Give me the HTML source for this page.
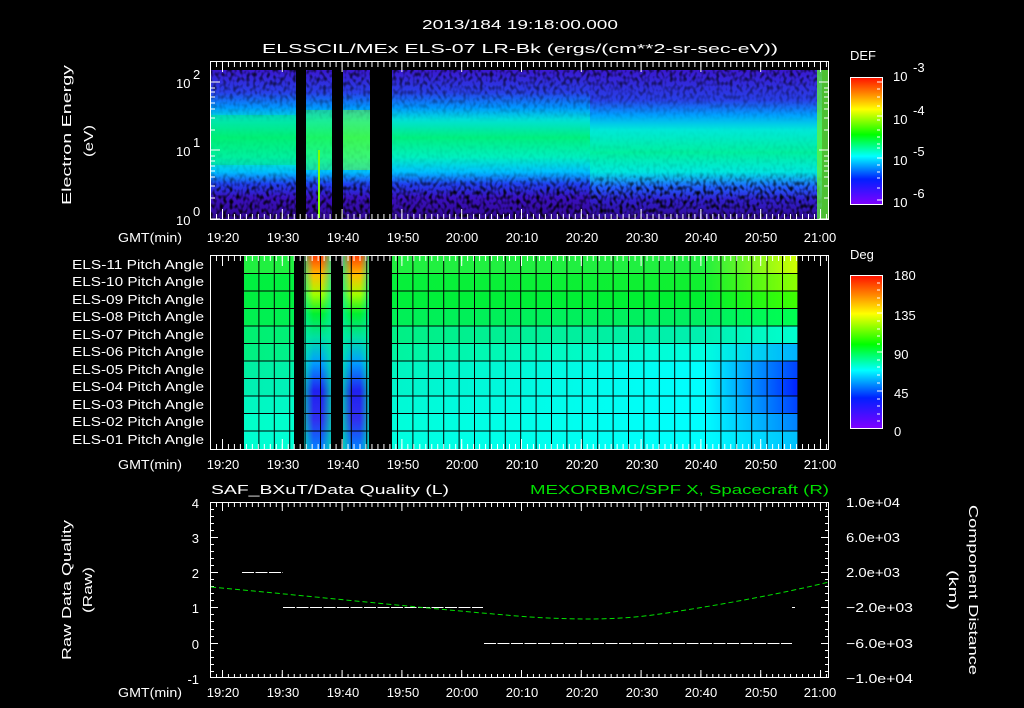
<!DOCTYPE html>
<html><head><meta charset="utf-8"><style>
html,body{margin:0;padding:0;background:#000;width:1024px;height:708px;overflow:hidden}
svg{display:block}
text{font-family:"Liberation Sans",sans-serif;fill:#fff;font-size:13px}
</style></head><body>
<svg width="1024" height="708" viewBox="0 0 1024 708" xmlns="http://www.w3.org/2000/svg">
<defs>
<linearGradient id="spec" x1="0" y1="0" x2="0" y2="1">
<stop offset="0" stop-color="#3a18d0"/><stop offset="0.15" stop-color="#2840e8"/>
<stop offset="0.25" stop-color="#0098ff"/><stop offset="0.33" stop-color="#00e0d8"/>
<stop offset="0.45" stop-color="#00f080"/><stop offset="0.58" stop-color="#00f0c0"/>
<stop offset="0.68" stop-color="#00c0ff"/><stop offset="0.76" stop-color="#2040f0"/>
<stop offset="0.85" stop-color="#3a10c0"/><stop offset="1" stop-color="#300890"/>
</linearGradient>
<linearGradient id="spec2" x1="0" y1="0" x2="0" y2="1">
<stop offset="0" stop-color="#3a18d0"/><stop offset="0.2" stop-color="#2840e8"/>
<stop offset="0.3" stop-color="#00a0ff"/><stop offset="0.4" stop-color="#00e8d8"/>
<stop offset="0.55" stop-color="#00f0a0"/><stop offset="0.68" stop-color="#00e8e0"/>
<stop offset="0.78" stop-color="#2060ff"/><stop offset="0.86" stop-color="#3020d0"/>
<stop offset="1" stop-color="#300890"/>
</linearGradient>
<linearGradient id="cbar" x1="0" y1="0" x2="0" y2="1">
<stop offset="0" stop-color="#ff1000"/><stop offset="0.12" stop-color="#ff8000"/>
<stop offset="0.25" stop-color="#ffff00"/><stop offset="0.45" stop-color="#00ff00"/>
<stop offset="0.62" stop-color="#00ffff"/><stop offset="0.8" stop-color="#0020ff"/>
<stop offset="1" stop-color="#8000ff"/>
</linearGradient>
<filter id="noise" x="0" y="0" width="1" height="1">
<feTurbulence type="fractalNoise" baseFrequency="0.3 0.22" numOctaves="1" seed="3"/>
<feColorMatrix type="matrix" values="0 0 0 0 0  0 0 0 0 0  0 0 0 0 0  0 0 0 -3 1.7"/>
</filter>
<linearGradient id="nmask" x1="0" y1="0" x2="0" y2="1">
<stop offset="0" stop-color="#fff" stop-opacity="0.8"/><stop offset="0.25" stop-color="#fff" stop-opacity="0.2"/>
<stop offset="0.35" stop-color="#fff" stop-opacity="0"/><stop offset="0.68" stop-color="#fff" stop-opacity="0.1"/>
<stop offset="0.8" stop-color="#fff" stop-opacity="0.9"/><stop offset="1" stop-color="#fff" stop-opacity="1"/>
</linearGradient>
<mask id="nm"><rect x="210" y="70" width="619" height="150" fill="url(#nmask)"/></mask>
<pattern id="tmin" patternUnits="userSpaceOnUse" x="210" y="0" width="5.98" height="708"><rect x="0" y="0" width="1" height="708" fill="#fff"/></pattern>
<pattern id="tmaj" patternUnits="userSpaceOnUse" x="222" y="0" width="59.8" height="708"><rect x="0" y="0" width="1" height="708" fill="#fff"/></pattern>
<pattern id="gridv" patternUnits="userSpaceOnUse" x="243" y="0" width="15.4" height="708"><rect x="0" y="0" width="1" height="708" fill="#000"/></pattern>
</defs>

<text x="422" y="29" font-size="16" textLength="196" lengthAdjust="spacingAndGlyphs">2013/184 19:18:00.000</text>
<text x="262" y="53" font-size="16" textLength="516" lengthAdjust="spacingAndGlyphs">ELSSCIL/MEx ELS-07 LR-Bk   (ergs/(cm**2-sr-sec-eV))</text>

<rect x="211" y="70" width="400" height="150" fill="url(#spec)"/>
<rect x="590" y="70" width="232" height="150" fill="url(#spec2)"/>
<rect x="211" y="115" width="85" height="50" fill="#00f060" opacity="0.35"/>
<rect x="306" y="110" width="26" height="60" fill="#40ff40" opacity="0.4"/>
<rect x="343" y="110" width="27" height="60" fill="#80ff20" opacity="0.45"/>
<rect x="211" y="70" width="618" height="150" filter="url(#noise)" mask="url(#nm)"/>
<rect x="817" y="70" width="12" height="150" fill="#60f040" opacity="0.8"/>
<rect x="296" y="70" width="10" height="150" fill="#000"/>
<rect x="332" y="70" width="11" height="150" fill="#000"/>
<rect x="370" y="70" width="22" height="150" fill="#000"/>
<rect x="318" y="150" width="2" height="68" fill="#80ff00"/>
<rect x="210.5" y="61.5" width="618" height="158" fill="none" stroke="#fff"/>
<rect x="210" y="62" width="619" height="5" fill="url(#tmin)"/>
<rect x="210" y="62" width="619" height="10" fill="url(#tmaj)"/>
<rect x="210" y="214" width="619" height="5" fill="url(#tmin)"/>
<rect x="210" y="209" width="619" height="10" fill="url(#tmaj)"/>
<g stroke="#fff">
<path d="M210 82h10M210 150h10M210 219h10M819 82h10M819 150h10M819 219h10"/>
<path d="M210 130h5M210 118h5M210 109h5M210 103h5M210 97h5M210 92h5M210 88h5M210 198h5M210 186h5M210 177h5M210 171h5M210 166h5M210 161h5M210 156h5"/>
<path d="M824 130h5M824 118h5M824 109h5M824 103h5M824 97h5M824 92h5M824 88h5M824 198h5M824 186h5M824 177h5M824 171h5M824 166h5M824 161h5M824 156h5"/>
</g>
<text x="176" y="88" font-size="14">10</text><text x="193" y="79" font-size="10">2</text>
<text x="176" y="156" font-size="14">10</text><text x="193" y="147" font-size="10">1</text>
<text x="176" y="225" font-size="14">10</text><text x="193" y="216" font-size="10">0</text>
<text transform="translate(71,135) rotate(-90)" x="-70" font-size="15" textLength="140" lengthAdjust="spacingAndGlyphs">Electron Energy</text>
<text transform="translate(93,141) rotate(-90)" x="-16" font-size="16" textLength="32" lengthAdjust="spacingAndGlyphs">(eV)</text>

<text x="850" y="60" font-size="16">DEF</text>
<rect x="850.5" y="77.5" width="32" height="127" fill="url(#cbar)" stroke="#fff"/>
<g stroke="#fff"><path d="M877 82h6M877 89h3M877 97h3M877 106h3M877 116h6M877 120h3M877 130h3M877 137h3M877 144h3M877 148h3M877 158h6M877 165h3M877 172h3M877 178h3M877 188h3M877 200h6"/></g>
<text x="893" y="81" font-size="16">10</text><text x="913" y="72" font-size="11">-3</text>
<text x="893" y="124" font-size="16">10</text><text x="913" y="115" font-size="11">-4</text>
<text x="893" y="165" font-size="16">10</text><text x="913" y="156" font-size="11">-5</text>
<text x="893" y="207" font-size="16">10</text><text x="913" y="198" font-size="11">-6</text>

<g font-size="14" text-anchor="middle">
<text x="118" y="242" text-anchor="start" textLength="64" lengthAdjust="spacingAndGlyphs">GMT(min)</text>
<text x="223" y="242">19:20</text><text x="283" y="242">19:30</text><text x="343" y="242">19:40</text><text x="403" y="242">19:50</text><text x="462" y="242">20:00</text><text x="522" y="242">20:10</text><text x="582" y="242">20:20</text><text x="642" y="242">20:30</text><text x="701" y="242">20:40</text><text x="761" y="242">20:50</text><text x="820" y="242">21:00</text>
<text x="118" y="469" text-anchor="start" textLength="64" lengthAdjust="spacingAndGlyphs">GMT(min)</text>
<text x="223" y="469">19:20</text><text x="283" y="469">19:30</text><text x="343" y="469">19:40</text><text x="403" y="469">19:50</text><text x="462" y="469">20:00</text><text x="522" y="469">20:10</text><text x="582" y="469">20:20</text><text x="642" y="469">20:30</text><text x="701" y="469">20:40</text><text x="761" y="469">20:50</text><text x="820" y="469">21:00</text>
<text x="118" y="697" text-anchor="start" textLength="64" lengthAdjust="spacingAndGlyphs">GMT(min)</text>
<text x="223" y="697">19:20</text><text x="283" y="697">19:30</text><text x="343" y="697">19:40</text><text x="403" y="697">19:50</text><text x="462" y="697">20:00</text><text x="522" y="697">20:10</text><text x="582" y="697">20:20</text><text x="642" y="697">20:30</text><text x="701" y="697">20:40</text><text x="761" y="697">20:50</text><text x="820" y="697">21:00</text>
</g>

<defs>
<linearGradient id="r1"><stop offset="0" stop-color="#20f040"/><stop offset="0.83" stop-color="#20f040"/><stop offset="1" stop-color="#d0ff00"/></linearGradient>
<linearGradient id="r2"><stop offset="0" stop-color="#00f040"/><stop offset="0.83" stop-color="#10f030"/><stop offset="1" stop-color="#90ff00"/></linearGradient>
<linearGradient id="r3"><stop offset="0" stop-color="#00f040"/><stop offset="0.83" stop-color="#00f030"/><stop offset="1" stop-color="#40ff00"/></linearGradient>
<linearGradient id="r4"><stop offset="0" stop-color="#00f050"/><stop offset="0.83" stop-color="#00f060"/><stop offset="1" stop-color="#00ff50"/></linearGradient>
<linearGradient id="r5"><stop offset="0" stop-color="#00f070"/><stop offset="0.83" stop-color="#00f0b0"/><stop offset="1" stop-color="#00ffd0"/></linearGradient>
<linearGradient id="r6"><stop offset="0" stop-color="#00f080"/><stop offset="0.83" stop-color="#00ffe0"/><stop offset="1" stop-color="#00b0ff"/></linearGradient>
<linearGradient id="r7"><stop offset="0" stop-color="#00f0a0"/><stop offset="0.83" stop-color="#00ffff"/><stop offset="1" stop-color="#0040ff"/></linearGradient>
<linearGradient id="r8"><stop offset="0" stop-color="#00f0b0"/><stop offset="0.83" stop-color="#00ffff"/><stop offset="1" stop-color="#0020ff"/></linearGradient>
<linearGradient id="r9"><stop offset="0" stop-color="#00f8c0"/><stop offset="0.83" stop-color="#00ffff"/><stop offset="1" stop-color="#0040ff"/></linearGradient>
<linearGradient id="r10"><stop offset="0" stop-color="#00ffc8"/><stop offset="0.83" stop-color="#00ffff"/><stop offset="1" stop-color="#0080ff"/></linearGradient>
<linearGradient id="r11"><stop offset="0" stop-color="#00ffd0"/><stop offset="0.83" stop-color="#00ffff"/><stop offset="1" stop-color="#00c0ff"/></linearGradient>
<linearGradient id="s1" x1="0" y1="0" x2="0" y2="1"><stop offset="0" stop-color="#ff4000"/><stop offset="0.1" stop-color="#ffc000"/><stop offset="0.2" stop-color="#a0ff00"/><stop offset="0.3" stop-color="#00f030"/><stop offset="0.42" stop-color="#00e0a0"/><stop offset="0.55" stop-color="#00a0ff"/><stop offset="0.7" stop-color="#2020f0"/><stop offset="0.85" stop-color="#3030f0"/><stop offset="1" stop-color="#0080ff"/></linearGradient>
<linearGradient id="sfade" x1="0" y1="0" x2="1" y2="0"><stop offset="0" stop-color="#00f0a0" stop-opacity="0.7"/><stop offset="0.35" stop-color="#00f0a0" stop-opacity="0"/><stop offset="0.65" stop-color="#00f0a0" stop-opacity="0"/><stop offset="1" stop-color="#00f0a0" stop-opacity="0.7"/></linearGradient>
</defs>
<g>
<rect x="243" y="256" width="555" height="18" fill="url(#r1)"/>
<rect x="243" y="273" width="555" height="18" fill="url(#r2)"/>
<rect x="243" y="291" width="555" height="18" fill="url(#r3)"/>
<rect x="243" y="308" width="555" height="18" fill="url(#r4)"/>
<rect x="243" y="326" width="555" height="18" fill="url(#r5)"/>
<rect x="243" y="343" width="555" height="18" fill="url(#r6)"/>
<rect x="243" y="361" width="555" height="18" fill="url(#r7)"/>
<rect x="243" y="378" width="555" height="18" fill="url(#r8)"/>
<rect x="243" y="396" width="555" height="18" fill="url(#r9)"/>
<rect x="243" y="413" width="555" height="18" fill="url(#r10)"/>
<rect x="243" y="431" width="555" height="18" fill="url(#r11)"/>
<rect x="304" y="256" width="27" height="193" fill="url(#s1)"/>
<rect x="304" y="256" width="27" height="193" fill="url(#sfade)"/>
<rect x="343" y="256" width="26" height="193" fill="url(#s1)"/>
<rect x="343" y="256" width="26" height="193" fill="url(#sfade)"/>
<rect x="243" y="256" width="555" height="193" fill="url(#gridv)"/>
<g stroke="#000" stroke-width="1"><path d="M243 273.5h555M243 291h555M243 308.5h555M243 326h555M243 343.5h555M243 361h555M243 378.5h555M243 396h555M243 413.5h555M243 431h555"/></g>
<rect x="211" y="256" width="32" height="193" fill="#000"/>
<rect x="294" y="256" width="10" height="193" fill="#000"/>
<rect x="331" y="256" width="12" height="193" fill="#000"/>
<rect x="369" y="256" width="23" height="193" fill="#000"/>
<rect x="798" y="256" width="31" height="193" fill="#000"/>
</g>
<rect x="210.5" y="255.5" width="618" height="194" fill="none" stroke="#fff"/>
<rect x="210" y="256" width="619" height="5" fill="url(#tmin)"/>
<rect x="210" y="256" width="619" height="10" fill="url(#tmaj)"/>
<rect x="210" y="444" width="619" height="5" fill="url(#tmin)"/>
<rect x="210" y="439" width="619" height="10" fill="url(#tmaj)"/>
<g font-size="13">
<text x="72" y="269" textLength="132" lengthAdjust="spacingAndGlyphs">ELS-11 Pitch Angle</text>
<text x="72" y="286" textLength="132" lengthAdjust="spacingAndGlyphs">ELS-10 Pitch Angle</text>
<text x="72" y="304" textLength="132" lengthAdjust="spacingAndGlyphs">ELS-09 Pitch Angle</text>
<text x="72" y="321" textLength="132" lengthAdjust="spacingAndGlyphs">ELS-08 Pitch Angle</text>
<text x="72" y="339" textLength="132" lengthAdjust="spacingAndGlyphs">ELS-07 Pitch Angle</text>
<text x="72" y="356" textLength="132" lengthAdjust="spacingAndGlyphs">ELS-06 Pitch Angle</text>
<text x="72" y="374" textLength="132" lengthAdjust="spacingAndGlyphs">ELS-05 Pitch Angle</text>
<text x="72" y="391" textLength="132" lengthAdjust="spacingAndGlyphs">ELS-04 Pitch Angle</text>
<text x="72" y="409" textLength="132" lengthAdjust="spacingAndGlyphs">ELS-03 Pitch Angle</text>
<text x="72" y="426" textLength="132" lengthAdjust="spacingAndGlyphs">ELS-02 Pitch Angle</text>
<text x="72" y="444" textLength="132" lengthAdjust="spacingAndGlyphs">ELS-01 Pitch Angle</text>
</g>

<text x="850" y="259" font-size="16">Deg</text>
<rect x="850.5" y="275.5" width="32" height="153" fill="url(#cbar)" stroke="#fff"/>
<g stroke="#fff"><path d="M877 283h3M877 290h3M877 298h3M877 305h3M877 313h6M877 321h3M877 329h3M877 336h3M877 344h3M877 352h6M877 360h3M877 367h3M877 375h3M877 383h3M877 391h6M877 399h3M877 406h3M877 414h3M877 421h3"/></g>
<g font-size="16"><text x="894" y="280">180</text><text x="894" y="320">135</text><text x="894" y="359">90</text><text x="894" y="398">45</text><text x="894" y="436">0</text></g>

<text x="211" y="494" font-size="15" textLength="238" lengthAdjust="spacingAndGlyphs">SAF_BXuT/Data Quality (L)</text>
<text x="530" y="494" font-size="15" style="fill:#00e000" textLength="299" lengthAdjust="spacingAndGlyphs">MEXORBMC/SPF X, Spacecraft (R)</text>
<rect x="210.5" y="502.5" width="618" height="175" fill="none" stroke="#fff"/>
<rect x="210" y="503" width="619" height="4" fill="url(#tmin)"/>
<rect x="210" y="503" width="619" height="8" fill="url(#tmaj)"/>
<rect x="210" y="674" width="619" height="4" fill="url(#tmin)"/>
<rect x="210" y="670" width="619" height="8" fill="url(#tmaj)"/>
<g stroke="#fff">
<path d="M210 537.5h8M210 572.5h8M210 607.5h8M210 643.5h8"/>
<path d="M210 509.5h4M210 516.5h4M210 523.5h4M210 530.5h4M210 544.5h4M210 551.5h4M210 558.5h4M210 565.5h4M210 579.5h4M210 586.5h4M210 593.5h4M210 600.5h4M210 614.5h4M210 621.5h4M210 629.5h4M210 636.5h4M210 650.5h4M210 657.5h4M210 664.5h4M210 671.5h4"/>
<path d="M821 537.5h8M821 572.5h8M821 607.5h8M821 643.5h8"/>
<path d="M825 509.5h4M825 516.5h4M825 523.5h4M825 530.5h4M825 544.5h4M825 551.5h4M825 558.5h4M825 565.5h4M825 579.5h4M825 586.5h4M825 593.5h4M825 600.5h4M825 614.5h4M825 621.5h4M825 629.5h4M825 636.5h4M825 650.5h4M825 657.5h4M825 664.5h4M825 671.5h4"/>
<path d="M242 572.5h41M283 607.5h200M484 643.5h308M792 607.5h3" stroke-dasharray="12 1.5"/>
</g>
<path d="M211 587 C 330 598, 440 610, 530 617 C 580 620, 620 620, 660 614 C 720 605, 780 594, 829 582" fill="none" stroke="#00e000" stroke-dasharray="5 3" stroke-width="1"/>
<g font-size="15" text-anchor="end"><text x="199" y="508">4</text><text x="199" y="543">3</text><text x="199" y="578">2</text><text x="199" y="613">1</text><text x="199" y="649">0</text><text x="199" y="684">-1</text></g>
<g font-size="14"><text x="846" y="507" textLength="54" lengthAdjust="spacingAndGlyphs">1.0e+04</text><text x="846" y="542" textLength="54" lengthAdjust="spacingAndGlyphs">6.0e+03</text><text x="846" y="577" textLength="54" lengthAdjust="spacingAndGlyphs">2.0e+03</text><text x="846" y="612" textLength="67" lengthAdjust="spacingAndGlyphs">−2.0e+03</text><text x="846" y="648" textLength="67" lengthAdjust="spacingAndGlyphs">−6.0e+03</text><text x="846" y="683" textLength="67" lengthAdjust="spacingAndGlyphs">−1.0e+04</text></g>
<text transform="translate(71,590) rotate(-90)" x="-70" font-size="15" textLength="140" lengthAdjust="spacingAndGlyphs">Raw Data Quality</text>
<text transform="translate(92,590) rotate(-90)" x="-23" font-size="16" textLength="46" lengthAdjust="spacingAndGlyphs">(Raw)</text>
<text transform="translate(969,590) rotate(90)" x="-85" font-size="15" textLength="170" lengthAdjust="spacingAndGlyphs">Component Distance</text>
<text transform="translate(949,590) rotate(90)" x="-20" font-size="16" textLength="40" lengthAdjust="spacingAndGlyphs">(km)</text>
</svg>
</body></html>
